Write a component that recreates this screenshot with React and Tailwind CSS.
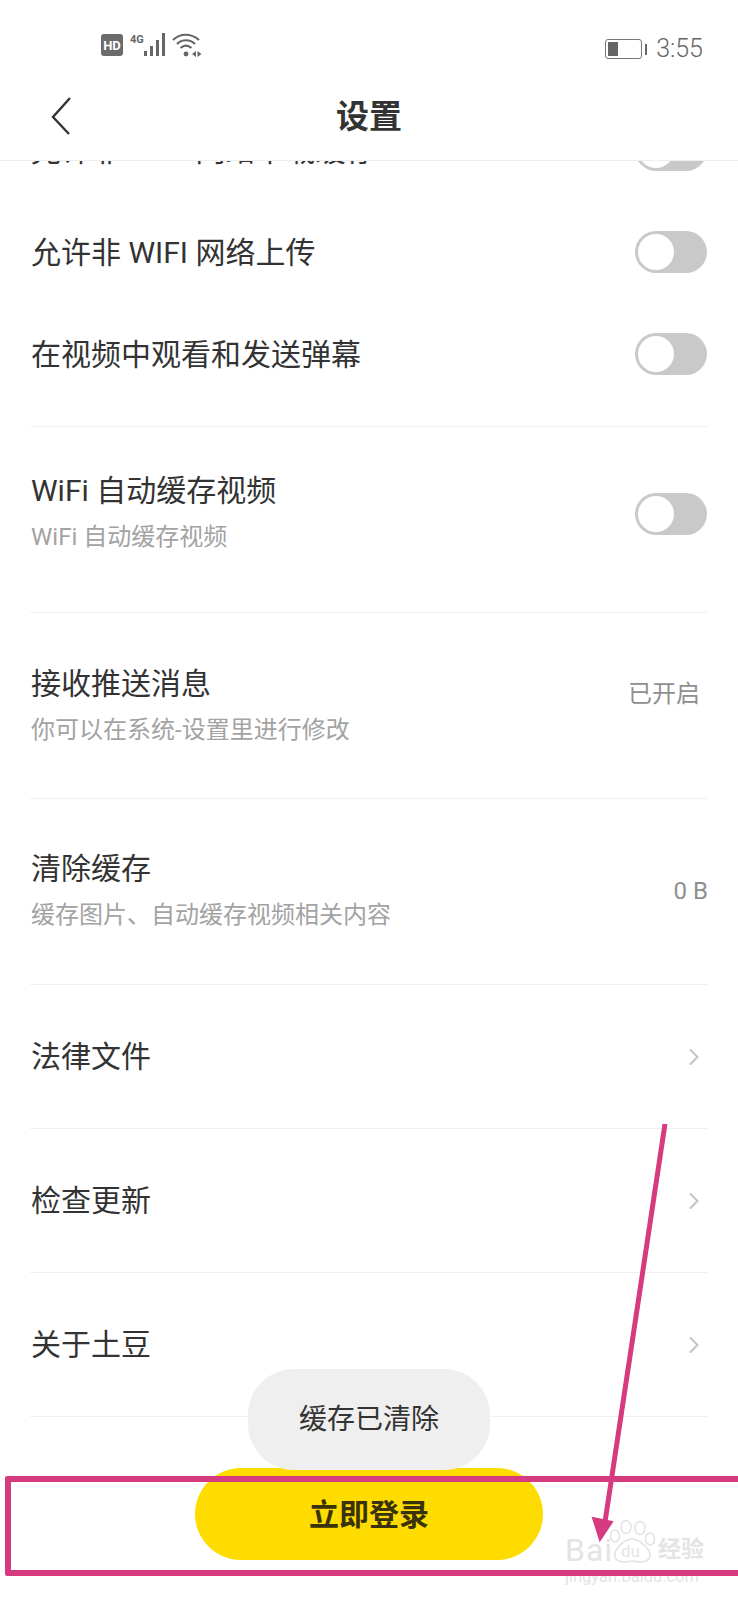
import { ChevronRight } from "lucide-react";

const Toggle = ({ className = "" }) => (
  <div className={`w-[72px] h-[42px] rounded-full bg-[#c9c9c9] p-[3px] shrink-0 ${className}`}>
    <div className="w-[36px] h-[36px] rounded-full bg-white" />
  </div>
);

const Divider = () => <div className="h-px bg-[#f0f0f0] mx-[30px]" />;

const ToggleRow = ({ title }) => (
  <div className="h-[102px] px-[31px] flex items-center justify-between">
    <span className="text-[30px] text-[#333]">{title}</span>
    <Toggle />
  </div>
);

const InfoRow = ({ title, sub, right, pad }) => (
  <div className={`h-[185px] pl-[31px] pr-[32px] flex justify-between ${pad}`}>
    <div className="flex flex-col">
      <span className="text-[30px] leading-[40px] text-[#333]">{title}</span>
      <span className="text-[24px] leading-[32px] mt-[10px] text-[#a3a3a3]">{sub}</span>
    </div>
    {right}
  </div>
);

const LinkRow = ({ title }) => (
  <div className="h-[143px] pl-[31px] pr-[30px] flex items-center justify-between">
    <span className="text-[30px] text-[#333]">{title}</span>
    <ChevronRight size={28} strokeWidth={1.8} className="text-[#c4c4c4]" />
  </div>
);

const StatusIcons = () => (
  <svg width="102" height="34" viewBox="0 0 102 34" className="text-[#666]">
    <rect x="0" y="4" width="22" height="22" rx="3" fill="#6b6b6b" />
    <text x="11" y="20" textAnchor="middle" fontSize="13" fontWeight="700" fill="#fff" fontFamily="Roboto">HD</text>
    <text x="29" y="13" fontSize="11" fontWeight="700" fill="#666" fontFamily="Roboto">4G</text>
    <rect x="43" y="21" width="3" height="5" fill="#666" />
    <rect x="49" y="16" width="3" height="10" fill="#666" />
    <rect x="55" y="10" width="3" height="16" fill="#666" />
    <rect x="61" y="3" width="3" height="23" fill="#666" />
    <path d="M72 10 C79 3 90 3 98 10 M76 14 C81 9 89 9 94 14 M79.5 18 C83 15 87 15 90.5 18" fill="none" stroke="#666" strokeWidth="2.2" />
    <circle cx="85" cy="24" r="2.4" fill="#666" />
    <path d="M95 21 L91 24 L95 27 Z M96.5 21 L100.5 24 L96.5 27 Z" fill="#666" />
  </svg>
);

const Battery = () => (
  <div className="flex items-center gap-[3px]">
    <div className="w-[37px] h-[20px] border border-[#777] rounded-[3px] p-[2px] flex">
      <div className="w-[10px] bg-[#666]" />
    </div>
    <div className="w-[2px] h-[11px] bg-[#666]" />
  </div>
);

const Watermark = () => (
  <div className="absolute left-[565px] top-[1520px] w-[160px] h-[70px] text-[#e4e4e4] z-30">
    <svg width="50" height="44" viewBox="0 0 50 44" className="absolute left-[42px] top-[0px]" fill="none" stroke="#e2e2e2" strokeWidth="1.5">
      <ellipse cx="8" cy="16" rx="4.5" ry="6" />
      <ellipse cx="19" cy="7" rx="5" ry="6.5" />
      <ellipse cx="33" cy="8" rx="5" ry="6.5" />
      <ellipse cx="43" cy="19" rx="4.5" ry="6" />
      <path d="M25 19 C17 19 6 30 8 37 C10 44 20 42 25 41 C31 42 41 44 43 36 C44 30 33 19 25 19 Z" />
    </svg>
    <span className="absolute left-0 top-[12px] text-[32px] leading-[36px] tracking-[1px]">Bai</span>
    <span className="absolute left-[56px] top-[21px] text-[17px] leading-[20px]">du</span>
    <span className="absolute left-[93px] top-[16px] text-[23px] leading-[28px] font-bold">经验</span>
    <span className="absolute left-0 top-[47px] text-[16.5px] leading-[20px] whitespace-nowrap">jingyan.baidu.com</span>
  </div>
);

export default function App() {
  return (
    <div className="relative w-[738px] h-[1600px] overflow-hidden bg-white font-['Roboto','Noto_Sans_CJK_SC',sans-serif]">
      {/* top bar */}
      <div className="relative z-10 h-[161px] bg-white border-b border-[#eeeeee]">
        <div className="h-[80px] pl-[101px] pr-[35px] pt-[30px] flex items-start justify-between">
          <StatusIcons />
          <div className="flex items-center gap-[9px] h-[34px] mt-[2px]">
            <Battery />
            <span className="text-[25px] leading-[34px] text-[#666] font-light">3:55</span>
          </div>
        </div>
        <div className="relative h-[80px] flex items-center justify-center">
          <svg width="24" height="40" viewBox="0 0 24 40" className="absolute left-[49px] top-[16px]" fill="none" stroke="#333" strokeWidth="2.4">
            <path d="M21 2 L4 21 L20 38" />
          </svg>
          <span className="text-[33px] font-bold text-[#333] -mt-[6px]">设置</span>
        </div>
      </div>

      {/* list scrolled under the bar */}
      <div className="-mt-[62px]">
        <ToggleRow title="允许非 WIFI 网络下载缓存" />
        <ToggleRow title="允许非 WIFI 网络上传" />
        <ToggleRow title="在视频中观看和发送弹幕" />
        <div className="h-[21px]" />
        <Divider />
        <InfoRow
          title="WiFi 自动缓存视频"
          sub="WiFi 自动缓存视频"
          pad="pt-[44px]"
          right={<Toggle className="mt-[22px] -mr-[1px]" />}
        />
        <Divider />
        <InfoRow
          title="接收推送消息"
          sub="你可以在系统-设置里进行修改"
          pad="pt-[51px]"
          right={<span className="text-[24px] text-[#8f8f8f] mt-[12px] mr-[6px]">已开启</span>}
        />
        <Divider />
        <InfoRow
          title="清除缓存"
          sub="缓存图片、自动缓存视频相关内容"
          pad="pt-[50px]"
          right={<span className="text-[24px] text-[#8f8f8f] mt-[24px] -mr-[2px]">0 B</span>}
        />
        <Divider />
        <LinkRow title="法律文件" />
        <Divider />
        <LinkRow title="检查更新" />
        <Divider />
        <LinkRow title="关于土豆" />
        <Divider />
      </div>

      {/* toast */}
      <div className="absolute left-[248px] top-[1369px] w-[242px] h-[101px] rounded-[46px] bg-[#efefef] flex items-center justify-center z-20">
        <span className="text-[28px] text-[#333]">缓存已清除</span>
      </div>

      {/* login button */}
      <div className="absolute left-[195px] top-[1468px] w-[348px] h-[92px] rounded-[46px] bg-[#ffdc00] flex items-center justify-center z-10">
        <span className="text-[30px] font-bold text-[#3a3208]">立即登录</span>
      </div>

      {/* screenshot annotations */}
      <Watermark />
      <div className="absolute left-[5px] top-[1476px] w-[740px] h-[100px] border-[6px] border-[#d63a7f] rounded-[2px] z-40" />
      <svg width="738" height="1600" viewBox="0 0 738 1600" className="absolute left-0 top-0 z-40 pointer-events-none">
        <path d="M665 1124 L605 1522" stroke="#d63a7f" strokeWidth="5" fill="none" />
        <path d="M593 1518 L612 1522 L600 1540 Z" fill="#d63a7f" stroke="#d63a7f" strokeWidth="2" />
      </svg>
    </div>
  );
}
